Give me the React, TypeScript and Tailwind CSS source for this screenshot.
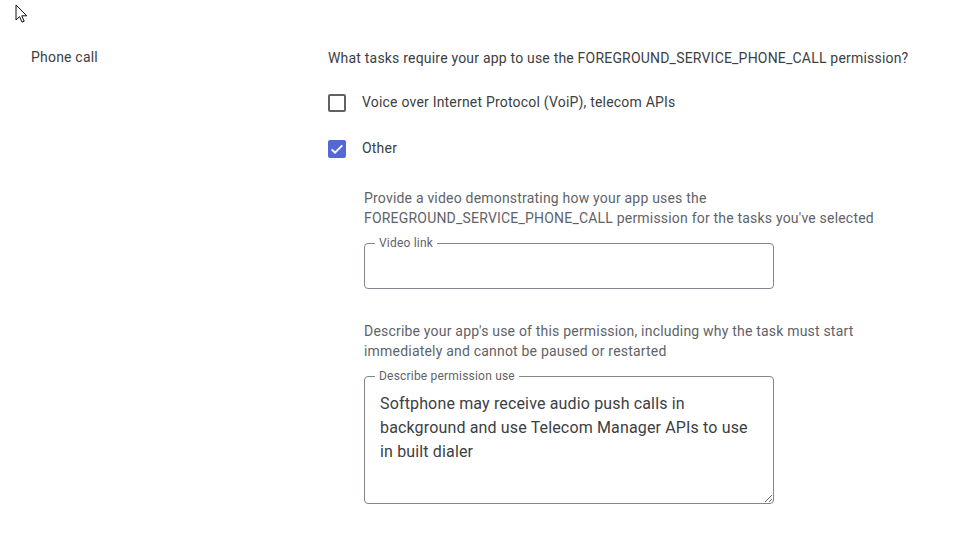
import React from 'react';

const font = "font-['Roboto',_'Liberation_Sans',_sans-serif]";

const Checkbox = ({ checked }: { checked?: boolean }) =>
  checked ? (
    <span className="w-[18px] h-[18px] rounded-[2px] bg-[#5467d8] flex items-center justify-center">
      <svg width="16" height="16" viewBox="0 0 24 24" fill="none">
        <path d="M4 12.5l5 5L20 6.5" stroke="white" strokeWidth="2.8" />
      </svg>
    </span>
  ) : (
    <span className="w-[18px] h-[18px] rounded-[2px] border-2 border-[#5f6368] bg-white" />
  );

const OutlinedField = ({ label, children }: { label: string; children: React.ReactNode }) => (
  <div className="relative w-[410px]">
    <span className="absolute left-[11px] -top-[8px] px-[4px] bg-white text-xs leading-4 tracking-[0.2px] text-[#5f6368] z-10">{label}</span>
    {children}
  </div>
);

const App = () => {
  return (
    <div className={`${font} relative bg-white w-[975px] h-[539px] text-[#3c4043] text-sm tracking-[0.2px]`}>
      {/* mouse pointer */}
      <svg className="absolute left-[15px] top-[4px]" width="13" height="20" viewBox="0 0 13 20">
        <path d="M1 1v15l3.6-3.4 2.4 5.6 2.2-1-2.4-5.4h5z" fill="white" stroke="#111" strokeWidth="1" strokeLinejoin="round" />
      </svg>

      <div className="flex pt-[47px]">
        <div className="w-[328px] pl-[31px] leading-5">Phone call</div>

        <div className="flex flex-col pt-[1px]">
          <p className="leading-5">What tasks require your app to use the FOREGROUND_SERVICE_PHONE_CALL permission?</p>

          <label className="flex items-center gap-4 mt-[26px] h-[18px]">
            <Checkbox />
            <span className="leading-5 -mt-[2px]">Voice over Internet Protocol (VoiP), telecom APIs</span>
          </label>

          <label className="flex items-center gap-4 mt-[28px] h-[18px]">
            <Checkbox checked />
            <span className="leading-5 -mt-[2px]">Other</span>
          </label>

          <div className="ml-[36px] mt-[30px] flex flex-col">
            <p className="w-[530px] leading-5 text-[#5f6368]">
              Provide a video demonstrating how your app uses the FOREGROUND_SERVICE_PHONE_CALL permission for the tasks you've selected
            </p>

            <div className="mt-[15px]">
              <OutlinedField label="Video link">
                <input
                  className="w-full h-[46px] border border-[#80868b] rounded-[4px] px-[15px] text-base outline-none"
                  defaultValue=""
                />
              </OutlinedField>
            </div>

            <p className="w-[530px] mt-[32px] leading-5 text-[#5f6368]">
              Describe your app's use of this permission, including why the task must start immediately and cannot be paused or restarted
            </p>

            <div className="mt-[15px]">
              <OutlinedField label="Describe permission use">
                <textarea
                  className="block w-full h-[128px] border border-[#80868b] rounded-[4px] pt-[15px] px-[15px] text-base leading-6 tracking-[0.15px] text-[#3c4043] outline-none resize-y"
                  defaultValue="Softphone may receive audio push calls in background and use Telecom Manager APIs to use in built dialer"
                />
              </OutlinedField>
            </div>
          </div>
        </div>
      </div>
    </div>
  );
};

export default App;
